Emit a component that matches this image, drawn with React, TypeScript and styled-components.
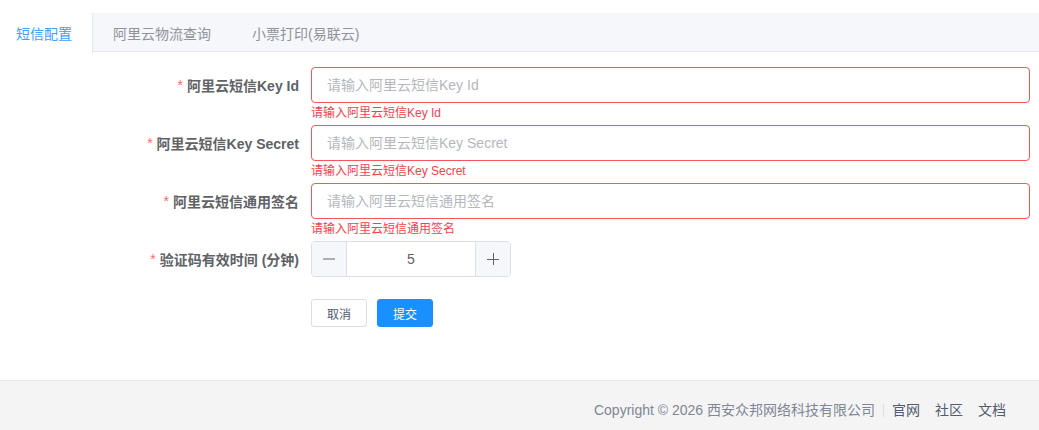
import React from "react";
import styled, { createGlobalStyle } from "styled-components";

const Global = createGlobalStyle`
  html, body { margin: 0; padding: 0; background: #fff; }
  body { font-family: "Liberation Sans", "Noto Sans CJK SC", sans-serif; font-size: 14px; color: #606266; }
  * { box-sizing: border-box; }
`;

const Page = styled.div`
  width: 1039px;
  min-height: 430px;
  display: flex;
  flex-direction: column;
`;

const TabsHeader = styled.div`
  margin-top: 13px;
  display: flex;
  height: 39px;
  background: #f5f7fa;
  border-bottom: 1px solid #e4e7ed;
`;

const Tab = styled.div<{ $active?: boolean; $first?: boolean }>`
  height: 40px;
  margin-bottom: -1px;
  display: flex;
  align-items: center;
  font-size: 14px;
  padding: 0 20px 0 ${(p) => (p.$first ? 16 : 20)}px;
  color: ${(p) => (p.$active ? "#409eff" : "#909399")};
  background: ${(p) => (p.$active ? "#fff" : "transparent")};
  border-right: 1px solid ${(p) => (p.$active ? "#e4e7ed" : "transparent")};
`;

const Form = styled.div`
  padding: 15px 9px 0 111px;
  display: flex;
  flex-direction: column;
`;

const FormItem = styled.div<{ $hasError?: boolean }>`
  display: grid;
  grid-template-columns: 200px 1fr;
  margin-bottom: ${(p) => (p.$hasError ? 0 : 22)}px;
`;

const Label = styled.label`
  height: 36px;
  display: flex;
  align-items: center;
  justify-content: flex-end;
  padding-right: 12px;
  font-weight: bold;
  font-size: 14px;
  color: #606266;
  white-space: nowrap;
`;

const Star = styled.span`
  color: #f56c6c;
  margin-right: 4px;
  font-weight: normal;
`;

const Control = styled.div`
  display: flex;
  flex-direction: column;
`;

const Input = styled.input<{ $error?: boolean }>`
  height: 36px;
  width: 100%;
  border: 1px solid ${(p) => (p.$error ? "#f5565b" : "#dcdfe6")};
  border-radius: 4px;
  padding: 0 15px;
  font-family: inherit;
  font-size: 14px;
  color: #606266;
  outline: none;
  &::placeholder { color: #b4b7bd; }
`;

const ErrorText = styled.div`
  height: 22px;
  padding-top: 3px;
  line-height: 14px;
  font-size: 12px;
  color: #f5404a;
`;

const NumberBox = styled.div`
  width: 200px;
  height: 36px;
  display: flex;
  border: 1px solid #dcdfe6;
  border-radius: 4px;
  overflow: hidden;
`;

const StepBtn = styled.div<{ $side: "left" | "right" }>`
  width: 35px;
  flex: none;
  background: #f5f7fa;
  display: flex;
  align-items: center;
  justify-content: center;
  color: #606266;
  ${(p) => (p.$side === "left" ? "border-right: 1px solid #dcdfe6;" : "border-left: 1px solid #dcdfe6;")}
`;

const NumberValue = styled.div`
  flex: 1;
  display: flex;
  align-items: center;
  justify-content: center;
  font-size: 14px;
  color: #606266;
`;

const Buttons = styled.div`
  display: flex;
  gap: 10px;
  margin-left: 200px;
`;

const Button = styled.button<{ $primary?: boolean }>`
  height: 28px;
  width: 56px;
  padding: 0;
  border-radius: 3px;
  font-family: inherit;
  font-size: 12px;
  border: 1px solid ${(p) => (p.$primary ? "#1890ff" : "#dcdee2")};
  background: ${(p) => (p.$primary ? "#1890ff" : "#fff")};
  color: ${(p) => (p.$primary ? "#fff" : "#515a6e")};
`;

const Footer = styled.div`
  margin-top: 53px;
  flex: 1;
  background: #f4f4f4;
  border-top: 1px solid #e8eaef;
  display: flex;
  justify-content: flex-end;
  align-items: flex-start;
  padding: 20px 33px 0 0;
  font-size: 14px;
`;

const Copyright = styled.span`
  color: #808695;
  line-height: 18px;
`;

const Divider = styled.span`
  width: 1px;
  height: 13px;
  background: #dcdee2;
  margin: 3px 8px 0 8px;
`;

const Links = styled.div`
  display: flex;
  gap: 15px;
`;

const Link = styled.a`
  color: #515a6e;
  line-height: 18px;
  text-decoration: none;
`;

const Minus = () => (
  <svg width="14" height="14" viewBox="0 0 14 14">
    <path d="M1 7h12" stroke="#606266" strokeWidth="1" />
  </svg>
);
const Plus = () => (
  <svg width="14" height="14" viewBox="0 0 14 14">
    <path d="M1 7.5h12M7.5 1v12" stroke="#606266" strokeWidth="1" />
  </svg>
);

export default function App() {
  return (
    <Page>
      <Global />
      <TabsHeader>
        <Tab $active $first>短信配置</Tab>
        <Tab>阿里云物流查询</Tab>
        <Tab>小票打印(易联云)</Tab>
      </TabsHeader>
      <Form>
        <FormItem $hasError>
          <Label><Star>*</Star>阿里云短信Key Id</Label>
          <Control>
            <Input $error placeholder="请输入阿里云短信Key Id" />
            <ErrorText>请输入阿里云短信Key Id</ErrorText>
          </Control>
        </FormItem>
        <FormItem $hasError>
          <Label><Star>*</Star>阿里云短信Key Secret</Label>
          <Control>
            <Input $error placeholder="请输入阿里云短信Key Secret" />
            <ErrorText>请输入阿里云短信Key Secret</ErrorText>
          </Control>
        </FormItem>
        <FormItem $hasError>
          <Label><Star>*</Star>阿里云短信通用签名</Label>
          <Control>
            <Input $error placeholder="请输入阿里云短信通用签名" />
            <ErrorText>请输入阿里云短信通用签名</ErrorText>
          </Control>
        </FormItem>
        <FormItem>
          <Label><Star>*</Star>验证码有效时间 (分钟)</Label>
          <Control>
            <NumberBox>
              <StepBtn $side="left"><Minus /></StepBtn>
              <NumberValue>5</NumberValue>
              <StepBtn $side="right"><Plus /></StepBtn>
            </NumberBox>
          </Control>
        </FormItem>
        <Buttons>
          <Button>取消</Button>
          <Button $primary>提交</Button>
        </Buttons>
      </Form>
      <Footer>
        <Copyright>Copyright © 2026 西安众邦网络科技有限公司</Copyright>
        <Divider />
        <Links>
          <Link>官网</Link>
          <Link>社区</Link>
          <Link>文档</Link>
        </Links>
      </Footer>
    </Page>
  );
}
